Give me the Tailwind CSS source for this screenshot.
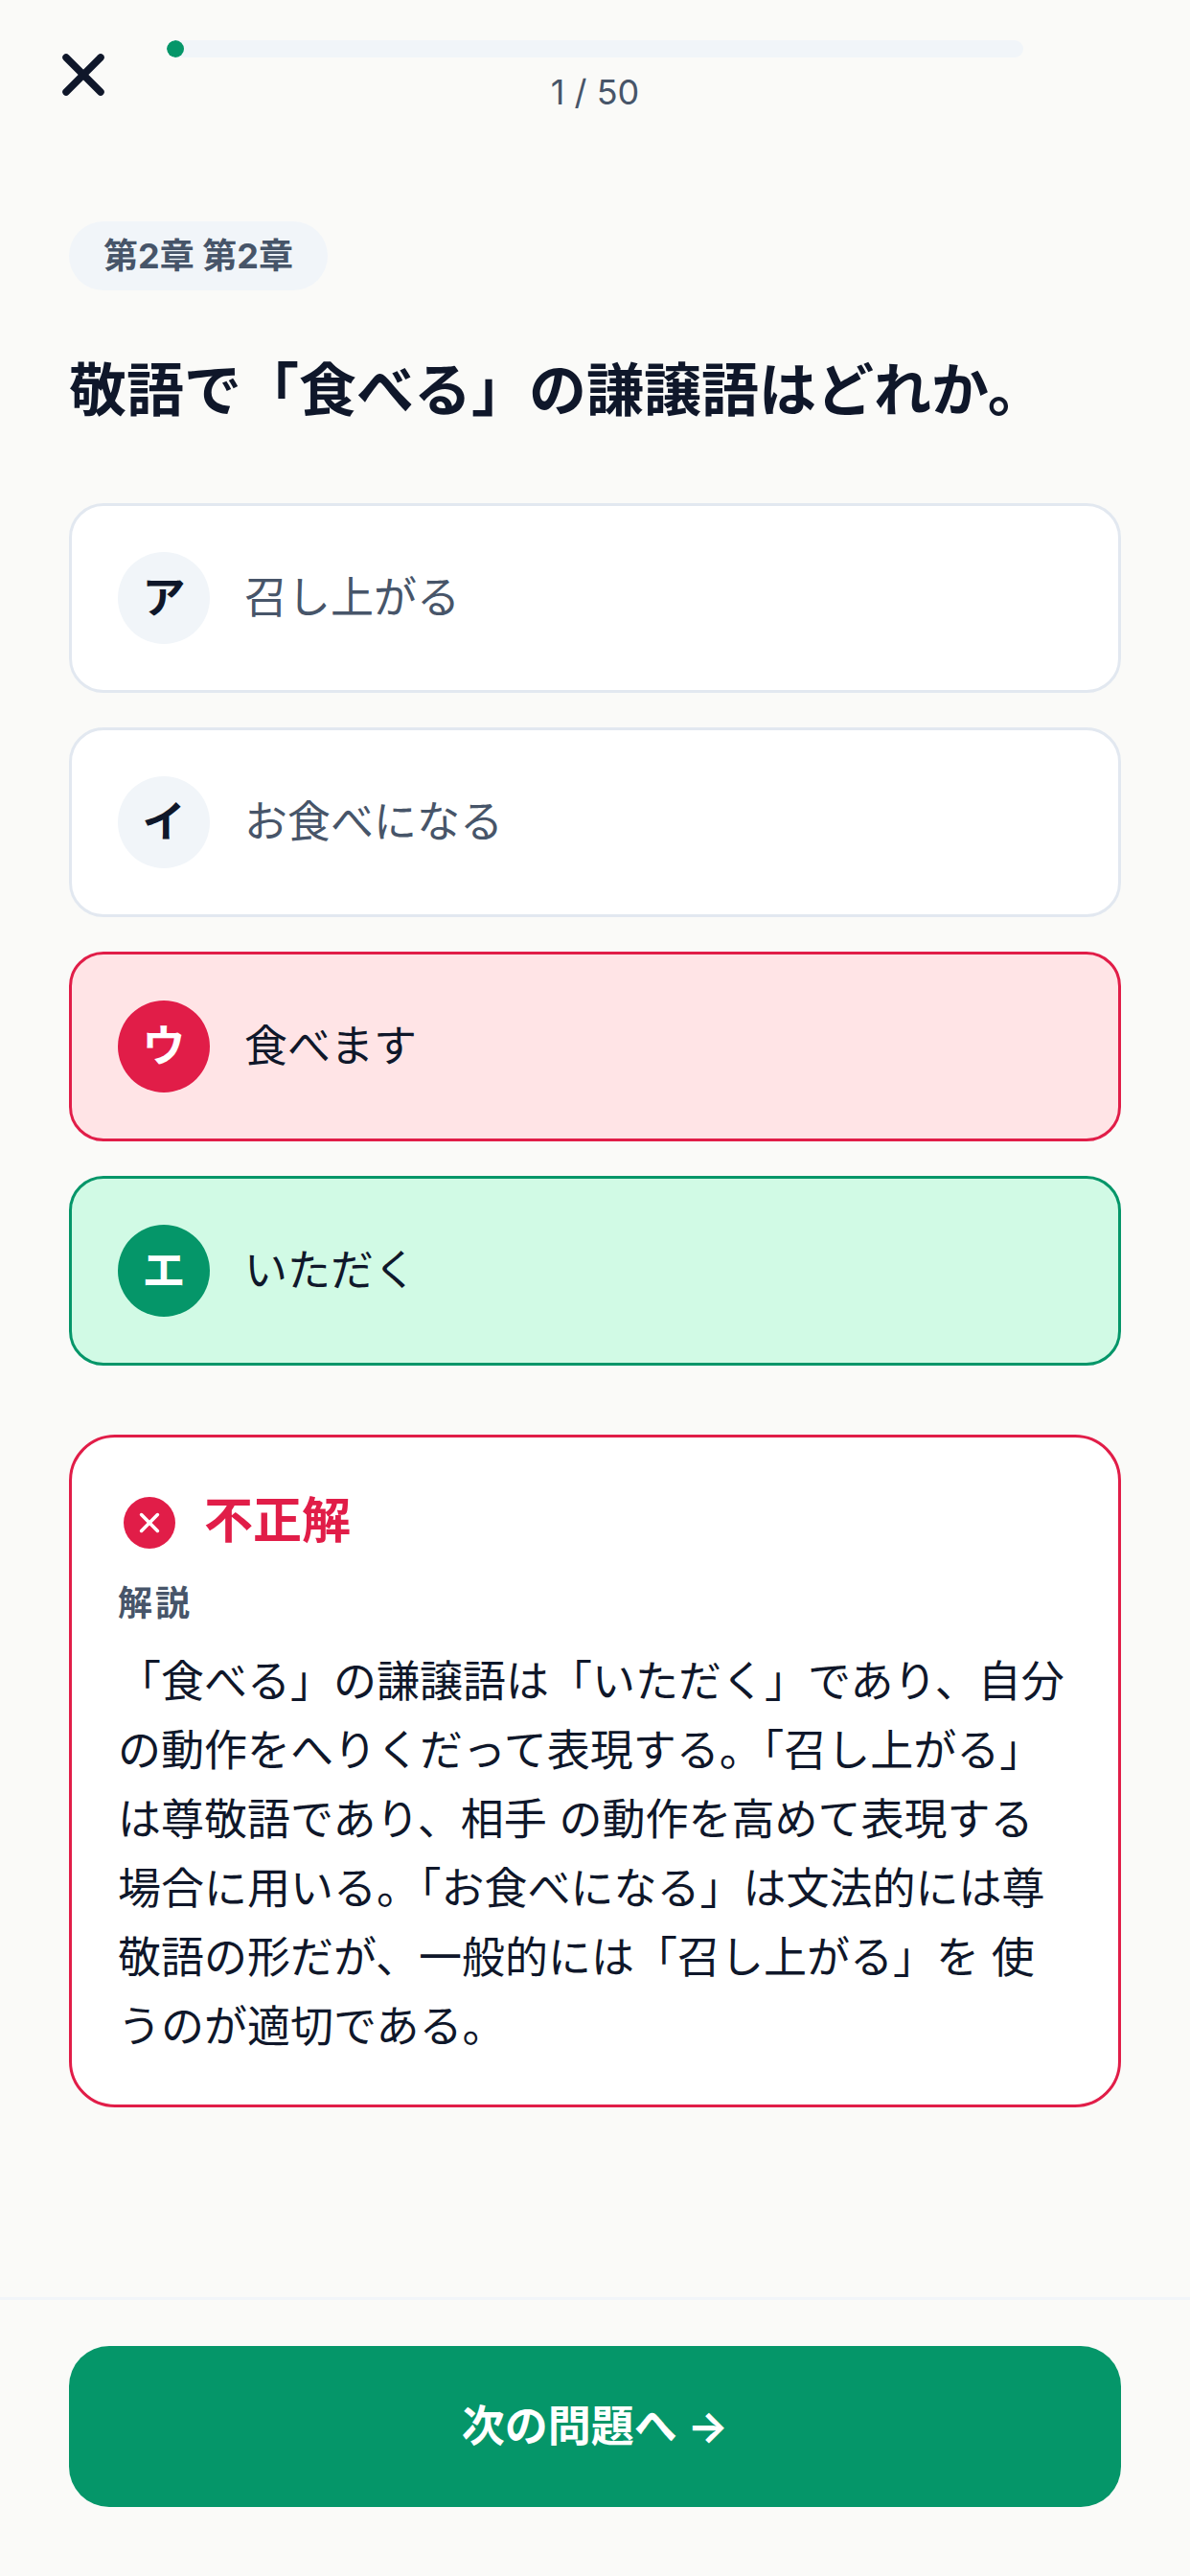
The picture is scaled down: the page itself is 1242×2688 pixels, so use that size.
<!DOCTYPE html>
<html lang="ja">
<head>
    <meta charset="UTF-8">
    <meta name="viewport" content="width=device-width, initial-scale=1.0">
    <title>Quiz</title>
    <script src="https://cdn.jsdelivr.net/npm/@tailwindcss/browser@4"></script>
</head>
<body class="bg-[#fafaf8] font-['Inter','Noto_Sans_CJK_JP',sans-serif] text-[#0f172a]">
<div class="flex flex-col h-[2688px] w-[1242px]">

    <!-- Header -->
    <header class="flex items-start gap-[51px] pt-[42px] pl-[51px] pr-[174px]">
        <button class="w-[72px] h-[72px] shrink-0">
            <svg viewBox="0 0 24 24" class="w-[72px] h-[72px]" fill="none" stroke="#0f172a" stroke-width="2.5" stroke-linecap="round"><path d="M18 6 6 18"/><path d="m6 6 12 12"/></svg>
        </button>
        <div class="flex-1">
            <div class="h-[18px] rounded-full bg-[#f1f5f9] overflow-hidden">
                <div class="h-full w-[18px] rounded-full bg-[#059669]"></div>
            </div>
            <p class="mt-[12px] text-center text-[36px] leading-[48px] text-[#475569]">1 / 50</p>
        </div>
    </header>

    <!-- Question + choices -->
    <main class="flex-1 px-[72px] pt-[111px]">
        <span class="inline-flex items-center h-[72px] px-[36px] rounded-full bg-[#f1f5f9] text-[36px] font-bold text-[#475569]">第2章 第2章</span>
        <h1 class="mt-[62px] mb-[76px] text-[60px] leading-[84px] font-bold">敬語で「食べる」の謙譲語はどれか。</h1>

        <div class="flex flex-col gap-[36px]">
            <div class="flex items-center gap-[36px] p-[48px] border-[3px] border-[#e2e8f0] rounded-[36px] bg-white">
                <span class="flex items-center justify-center w-[96px] h-[96px] rounded-full bg-[#f1f5f9] text-[45px] font-bold">ア</span>
                <span class="text-[45px] text-[#475569]">召し上がる</span>
            </div>
            <div class="flex items-center gap-[36px] p-[48px] border-[3px] border-[#e2e8f0] rounded-[36px] bg-white">
                <span class="flex items-center justify-center w-[96px] h-[96px] rounded-full bg-[#f1f5f9] text-[45px] font-bold">イ</span>
                <span class="text-[45px] text-[#475569]">お食べになる</span>
            </div>
            <div class="flex items-center gap-[36px] p-[48px] border-[3px] border-[#e11d48] rounded-[36px] bg-[#ffe4e6]">
                <span class="flex items-center justify-center w-[96px] h-[96px] rounded-full bg-[#e11d48] text-white text-[45px] font-bold">ウ</span>
                <span class="text-[45px]">食べます</span>
            </div>
            <div class="flex items-center gap-[36px] p-[48px] border-[3px] border-[#059669] rounded-[36px] bg-[#d1fae5]">
                <span class="flex items-center justify-center w-[96px] h-[96px] rounded-full bg-[#059669] text-white text-[45px] font-bold">エ</span>
                <span class="text-[45px]">いただく</span>
            </div>
        </div>

        <!-- Explanation -->
        <section class="mt-[72px] border-[3px] border-[#e11d48] rounded-[48px] bg-white px-[48px] pt-[53px] pb-[45px]">
            <div class="flex items-center gap-[21px] ml-[-3px]">
                <svg viewBox="0 0 24 24" class="w-[72px] h-[72px]"><circle cx="12" cy="12" r="9" fill="#e11d48"/><path d="M9.2 9.2l5.6 5.6M14.8 9.2l-5.6 5.6" stroke="#fff" stroke-width="1.2" stroke-linecap="round" fill="none"/></svg>
                <span class="text-[51px] leading-[72px] font-bold text-[#e11d48] -translate-y-[2px]">不正解</span>
            </div>
            <p class="mt-[24px] text-[36px] leading-[48px] font-bold tracking-[3px] text-[#475569]">解説</p>
            <p class="mt-[22px] text-[45px] leading-[72px]">「食べる」の謙譲語は「いただく」であり、自分の動作をへりくだって表現する。「召し上がる」は尊敬語であり、相手 の動作を高めて表現する場合に用いる。「お食べになる」は文法的には尊敬語の形だが、一般的には「召し上がる」を 使うのが適切である。</p>
        </section>
    </main>

    <!-- Footer -->
    <footer class="border-t-[3px] border-[#f1f5f9] px-[72px] pt-[48px] pb-[72px]">
        <button class="w-full h-[168px] rounded-[42px] bg-[#059669] text-white text-[45px] font-bold">次の問題へ →</button>
    </footer>
</div>
</body>
</html>
